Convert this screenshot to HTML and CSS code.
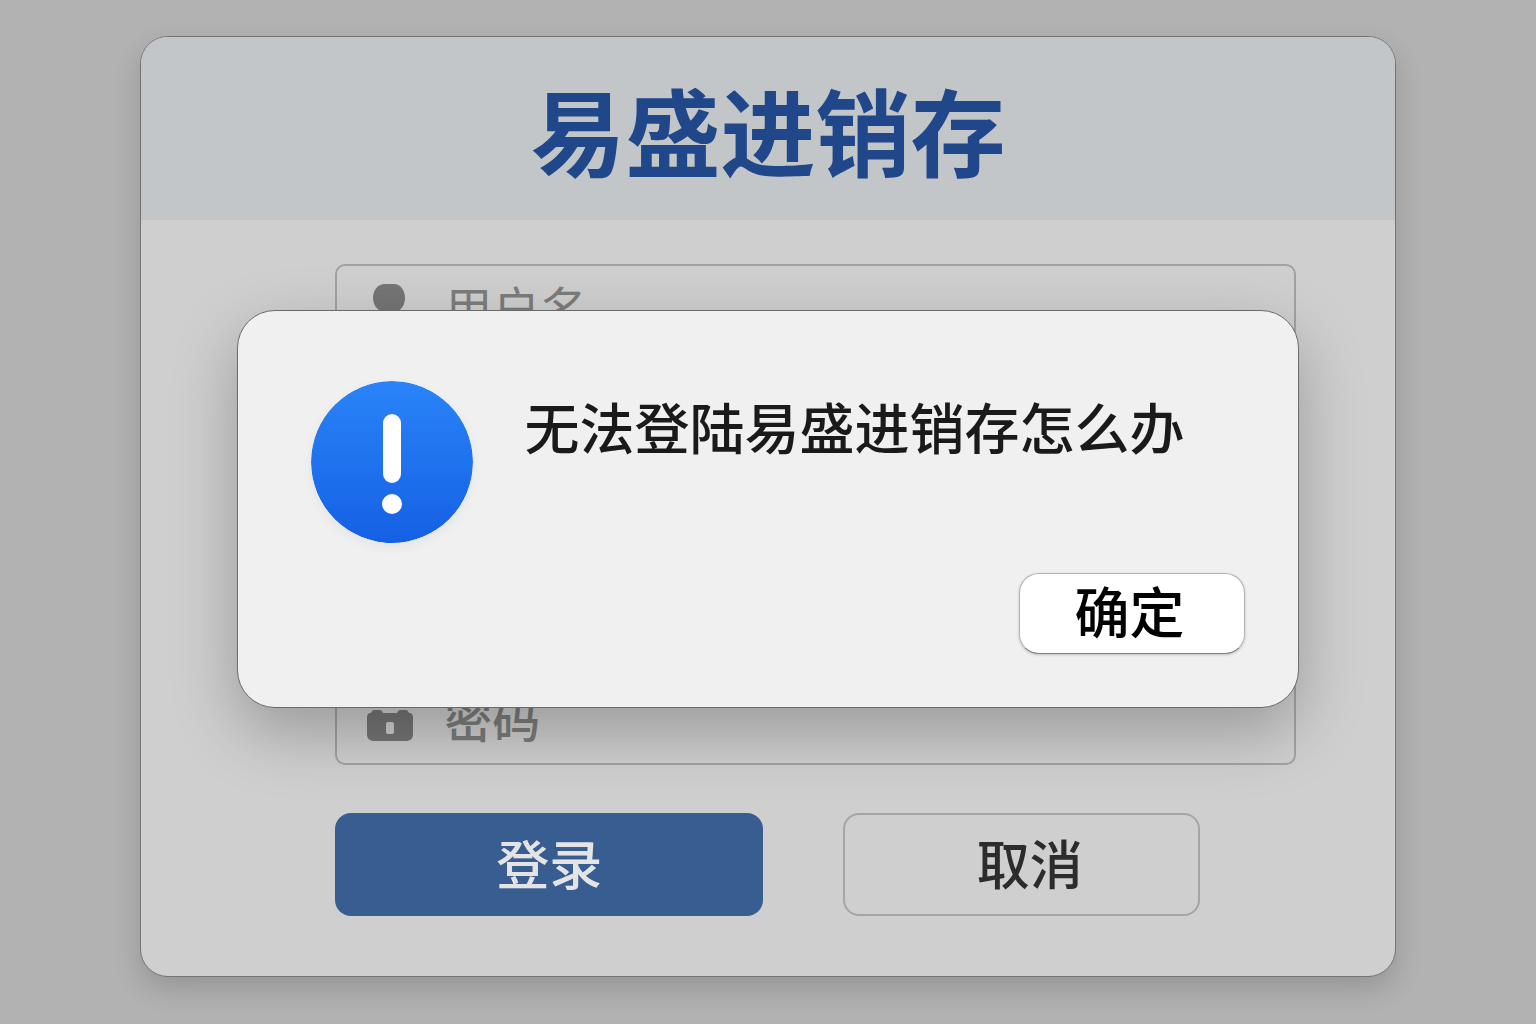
FILE: index.html
```html
<!DOCTYPE html>
<html lang="zh-CN">
<head>
    <meta charset="utf-8">
    <title>易盛进销存</title>
    <link rel="stylesheet" href="styles.css">
</head>
<body>
<div class="window">
    <div class="header">
        <h1>易盛进销存</h1>
    </div>
    <form class="login">
        <div class="fields">
            <label class="field">
                <svg class="icon" viewBox="0 0 48 56" aria-hidden="true">
                    <path d="M19 3h9c6 0 11 6 11 14 0 9-6 15-15.500 15S7 26 7 17C7 9 12 3 19 3z"/>
                    <path d="M4 54c0-10 8-18 20-18s20 8 20 18z"/>
                </svg>
                <input type="text" placeholder="用户名" aria-label="用户名">
            </label>
            <label class="field password">
                <svg class="icon" viewBox="0 0 48 56" aria-hidden="true">
                    <path d="M11 14c0-15 26-15 26 0" fill="none" stroke="currentColor" stroke-width="4"/>
                    <path fill-rule="evenodd" d="M8 18h6q2 0 3 3h14q1-3 3-3h6q2 0 3 3c3 0 4 2 4 5v16c0 5-3 7-7 7H8c-4 0-7-2-7-7V26c0-3 1-5 4-5q1-3 3-3zM22 30q-2 0-2 2v8q0 2 2 2h4q2 0 2-2v-8q0-2-2-2z"/>
                </svg>
                <input type="password" placeholder="密码" aria-label="密码">
            </label>
        </div>
        <div class="buttons">
            <button type="submit" class="btn btn-login">登录</button>
            <button type="button" class="btn btn-cancel">取消</button>
        </div>
    </form>
</div>
<!-- 提示框 -->
<div class="overlay">
    <div class="dialog" role="alertdialog" aria-labelledby="message">
        <div class="content">
            <svg class="alert" viewBox="0 0 162 162" aria-hidden="true">
                <defs>
                    <linearGradient id="blue" x1="0" y1="0" x2="0" y2="1">
                        <stop offset="0" stop-color="#2a84f8"/>
                        <stop offset="1" stop-color="#1560e4"/>
                    </linearGradient>
                </defs>
                <circle cx="81" cy="81" r="81" fill="url(#blue)"/>
                <rect x="72" y="33" width="18" height="69" rx="9" fill="#fff"/>
                <circle cx="81" cy="123" r="10" fill="#fff"/>
            </svg>
            <p id="message" class="message">无法登陆易盛进销存怎么办</p>
        </div>
        <button type="button" class="btn-ok">确定</button>
    </div>
</div>
</body>
</html>
```

FILE: styles.css
```css
* {
    margin: 0;
    padding: 0;
    box-sizing: border-box;
}
body {
    min-height: 100vh;
    padding: 36px 9.1% 48px;
    background: #b2b2b2;
    font-family: "Noto Sans CJK SC", sans-serif;
}
button, input {
    font-family: inherit;
}
button {
    cursor: pointer;
}
.window {
    overflow: hidden;
    background: #cfcfcf;
    border: 1px solid #747474;
    border-radius: 28px;
    box-shadow: 0 12px 28px rgba(0, 0, 0, .16);
}
.header {
    padding: 32px 0 31px;
    background: #c3c6c9;
    text-align: center;
}
.header h1 {
    color: #204789;
    font-size: 95px;
    font-weight: 700;
    line-height: 120px;
}
.login {
    padding: 44px 7.9% 60px 15.5%;
}
.fields {
    display: flex;
    flex-direction: column;
    gap: 321px;
}
.field {
    display: flex;
    align-items: center;
    gap: 30px;
    height: 90px;
    padding: 0 29px;
    border: 2px solid #a2a2a2;
    border-radius: 10px;
    color: #757575;
}
.icon {
    flex: none;
    width: 48px;
    height: 56px;
    fill: currentColor;
}
.field input {
    flex: 1;
    min-width: 0;
    padding-bottom: 6px;
    border: 0;
    outline: none;
    background: none;
    color: #333;
    font-size: 48px;
    line-height: 64px;
}
.field input::placeholder {
    color: #7c7c7c;
    opacity: 1;
}
.password input {
    font-weight: 500;
}
.buttons {
    display: grid;
    grid-template-columns: 6fr 5fr;
    gap: 80px;
    margin-top: 48px;
    padding-right: 10%;
}
.btn {
    height: 103px;
    padding-bottom: 6px;
    border-radius: 16px;
    font-size: 53px;
    font-weight: 500;
    line-height: 64px;
}
.btn-login {
    border: 0;
    background: #385d91;
    color: #e4e4e4;
}
.btn-cancel {
    padding-left: 16px;
    border: 2px solid #a5a5a5;
    background: none;
    color: #2c2c2c;
}
.overlay {
    position: fixed;
    top: 0;
    right: 0;
    bottom: 0;
    left: 0;
    display: flex;
    align-items: center;
    justify-content: center;
    padding: 0 15.4% 6px;
}
.dialog {
    flex: 1;
    display: flex;
    flex-direction: column;
    gap: 30px;
    padding: 70px 53px 53px 73px;
    background: #f0f0f0;
    border: 1px solid #6a6a6a;
    border-radius: 38px;
    box-shadow: 0 24px 64px rgba(0, 0, 0, .26);
}
.content {
    display: flex;
    align-items: flex-start;
    gap: 52px;
}
.alert {
    flex: none;
    width: 162px;
    height: 162px;
    border-radius: 50%;
    box-shadow: 0 4px 12px rgba(0, 0, 0, .05);
}
.message {
    color: #1a1a1a;
    font-size: 55px;
    font-weight: 500;
    line-height: 88px;
}
.btn-ok {
    align-self: flex-end;
    width: 226px;
    height: 81px;
    padding: 0 6px 10px 0;
    border: 1px solid #b4b4b4;
    border-bottom-color: #808080;
    border-radius: 20px;
    background: #fff;
    box-shadow: 0 1px 3px rgba(0, 0, 0, .2);
    color: #000;
    font-size: 55px;
    font-weight: 500;
    line-height: 64px;
}
```
